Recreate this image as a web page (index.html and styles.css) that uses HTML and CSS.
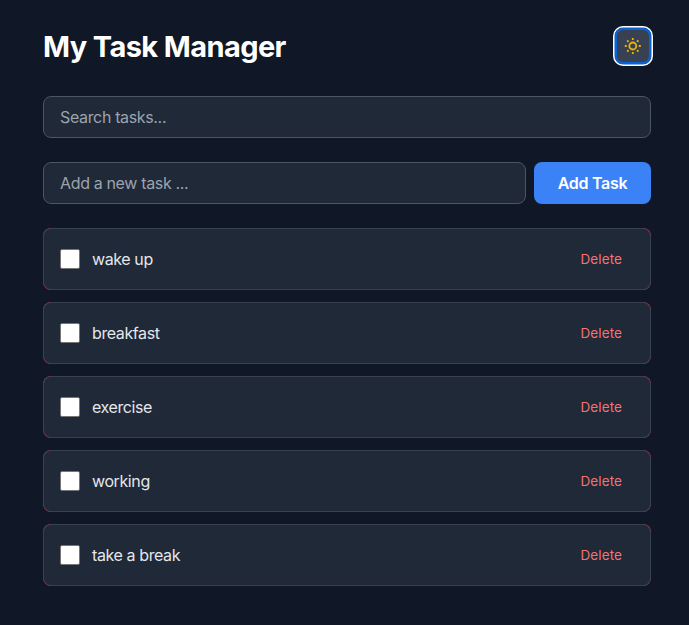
FILE: index.html
```html
<!DOCTYPE html>
<html lang="en">
<head>
<meta charset="utf-8">
<title>My Task Manager</title>
<link rel="stylesheet" href="styles.css">
</head>
<body>
<main class="app">
  <header class="header">
    <h1 class="title">My Task Manager</h1>
    <button class="theme" aria-label="Toggle theme">
      <svg width="20" height="20" viewBox="0 0 20 20" fill="none" stroke="currentColor" stroke-width="1.8">
        <circle cx="9.8" cy="10" r="3.5"/>
        <path d="M9.8 2v2M9.8 16v2M1.8 10h2M15.8 10h2M4.2 4.4l1.4 1.4M14 14.2l1.4 1.4M4.2 15.6l1.4-1.4M14 5.8l1.4-1.4"/>
      </svg>
    </button>
  </header>
  <input class="field search" type="text" placeholder="Search tasks...">
  <form class="add-form">
    <input class="field new-task" type="text" placeholder="Add a new task ...">
    <button class="add" type="button">Add Task</button>
  </form>
  <ul class="tasks">
    <li class="task"><div class="card"><input class="check" type="checkbox"><span class="name">wake up</span><button class="delete">Delete</button></div></li>
    <li class="task"><div class="card"><input class="check" type="checkbox"><span class="name">breakfast</span><button class="delete">Delete</button></div></li>
    <li class="task"><div class="card"><input class="check" type="checkbox"><span class="name">exercise</span><button class="delete">Delete</button></div></li>
    <li class="task"><div class="card"><input class="check" type="checkbox"><span class="name">working</span><button class="delete">Delete</button></div></li>
    <li class="task"><div class="card"><input class="check" type="checkbox"><span class="name">take a break</span><button class="delete">Delete</button></div></li>
  </ul>
</main>
</body>
</html>
```
FILE: styles.css
```css
* { box-sizing: border-box; }
body {
  margin: 0;
  min-height: 100vh;
  background: #101726;
  color: #e5e7eb;
  font: 16px/24px Inter, "Liberation Sans", sans-serif;
}
button, input { font: inherit; margin: 0; }
.app { padding: 28px 38px 0 43px; }
.header {
  display: flex;
  justify-content: space-between;
  align-items: center;
  height: 36px;
  margin-bottom: 32px;
}
.title {
  margin: 0;
  padding-top: 2px;
  color: #fff;
  font-size: 29px;
  line-height: 36px;
  font-weight: 700;
  letter-spacing: -0.6px;
}
.theme {
  display: flex;
  align-items: center;
  justify-content: center;
  width: 36px;
  height: 36px;
  padding: 0;
  border: 0;
  border-radius: 8px;
  background: #374151;
  color: #eab308;
  box-shadow: 0 0 0 0.5px #0a63d6, 0 0 0 2px #fff, inset 0 0 0 2px #0a63d6;
}
.field {
  display: block;
  width: 100%;
  height: 42px;
  padding: 0 16px;
  border: 1px solid #4b5563;
  border-radius: 8px;
  background: #1f2937;
  color: #fff;
  letter-spacing: -0.35px;
}
.field::placeholder { color: #9ca3af; opacity: 1; }
.add-form { display: flex; gap: 8px; margin: 24px 0; }
.new-task { flex: 1; min-width: 0; }
.add {
  width: 117px;
  height: 42px;
  padding: 0;
  border: 0;
  border-radius: 8px;
  background: #3b82f6;
  color: #fff;
  font-weight: 600;
  letter-spacing: -0.3px;
}
.tasks {
  display: flex;
  flex-direction: column;
  gap: 12px;
  margin: 0;
  padding: 0;
  list-style: none;
}
.task { border-radius: 8px; background: #c53b45; overflow: hidden; }
.card {
  display: flex;
  align-items: center;
  gap: 12px;
  height: 62px;
  padding: 0 16px;
  border: 1px solid #374151;
  border-radius: 8px;
  background: #1f2937;
}
.check {
  appearance: none;
  width: 20px;
  height: 20px;
  border: 1px solid #767676;
  border-radius: 2px;
  background: #fff;
}
.name { flex: 1; letter-spacing: -0.4px; }
.delete {
  padding: 4px 12px;
  border: 0;
  background: none;
  color: #f87171;
  font-size: 13.5px;
  line-height: 20px;
  letter-spacing: 0.1px;
}
```
